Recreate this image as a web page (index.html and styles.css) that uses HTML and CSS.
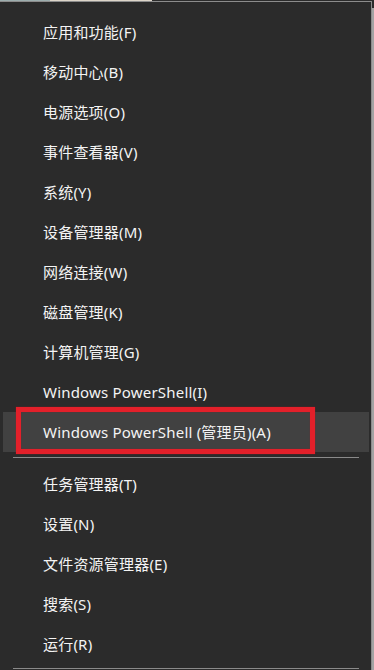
FILE: index.html
```html
<!DOCTYPE html>
<html lang="zh-CN">
<head>
<meta charset="utf-8">
<title>WinX 菜单</title>
<link rel="stylesheet" href="styles.css">
</head>
<body>
<div class="page">
  <div class="strip">
    <span class="seg seg-a"></span>
    <span class="seg seg-b"></span>
    <span class="seg seg-c"></span>
  </div>
  <div class="main">
    <div class="menu">
      <div class="item">应用和功能(F)</div>
      <div class="item">移动中心(B)</div>
      <div class="item">电源选项(O)</div>
      <div class="item">事件查看器(V)</div>
      <div class="item">系统(Y)</div>
      <div class="item">设备管理器(M)</div>
      <div class="item">网络连接(W)</div>
      <div class="item">磁盘管理(K)</div>
      <div class="item">计算机管理(G)</div>
      <div class="item">Windows PowerShell(I)</div>
      <div class="item item-active">Windows PowerShell (管理员)(A)<span class="mark"></span></div>
      <div class="sep"></div>
      <div class="item">任务管理器(T)</div>
      <div class="item">设置(N)</div>
      <div class="item">文件资源管理器(E)</div>
      <div class="item">搜索(S)</div>
      <div class="item">运行(R)</div>
      <div class="sep sep-end"></div>
    </div>
    <div class="edge"></div>
  </div>
</div>
</body>
</html>
```
FILE: styles.css
```css
html, body {
  margin: 0;
  padding: 0;
}
body {
  background: #2b2b2b;
  width: 374px;
  height: 670px;
  overflow: hidden;
  font-family: "Noto Sans", "Noto Sans CJK SC", sans-serif;
  font-size: 15px;
  letter-spacing: 0.2px;
  color: #f4f4f4;
}
.page {
  display: flex;
  flex-direction: column;
  height: 670px;
}
.strip {
  display: flex;
  height: 1px;
}
.seg { display: block; height: 1px; }
.seg-a { width: 50px; background: #9cadad; }
.seg-b { width: 102px; background: #ddd5c9; }
.seg-c { flex: 1; background: #2b2b2b; }
.main {
  display: flex;
  flex: 1;
}
.menu {
  width: 372px;
  box-sizing: border-box;
  border-top: 1px solid #8c8c8c;
  border-right: 1px solid #8c8c8c;
  padding: 10px 2px 0 3px;
  display: flex;
  flex-direction: column;
}
.edge {
  width: 2px;
  margin-top: 7px;
  background: #a3a3a3;
}
.item {
  height: 40px;
  display: flex;
  align-items: center;
  padding-left: 40px;
  white-space: nowrap;
  line-height: 1;
}
.item-active {
  background: #414141;
  position: relative;
}
.mark {
  position: absolute;
  left: 13px;
  top: -5px;
  width: 299px;
  height: 47px;
  box-sizing: border-box;
  border: 5px solid #e3202a;
  box-shadow: 0 0 1px #a01820, inset 0 0 1px #a01820;
}
.sep {
  height: 1px;
  background: #8a8a8a;
  margin: 5px 10px 6px;
  flex: none;
}
.sep-end {
  margin-top: 4px;
}
```
